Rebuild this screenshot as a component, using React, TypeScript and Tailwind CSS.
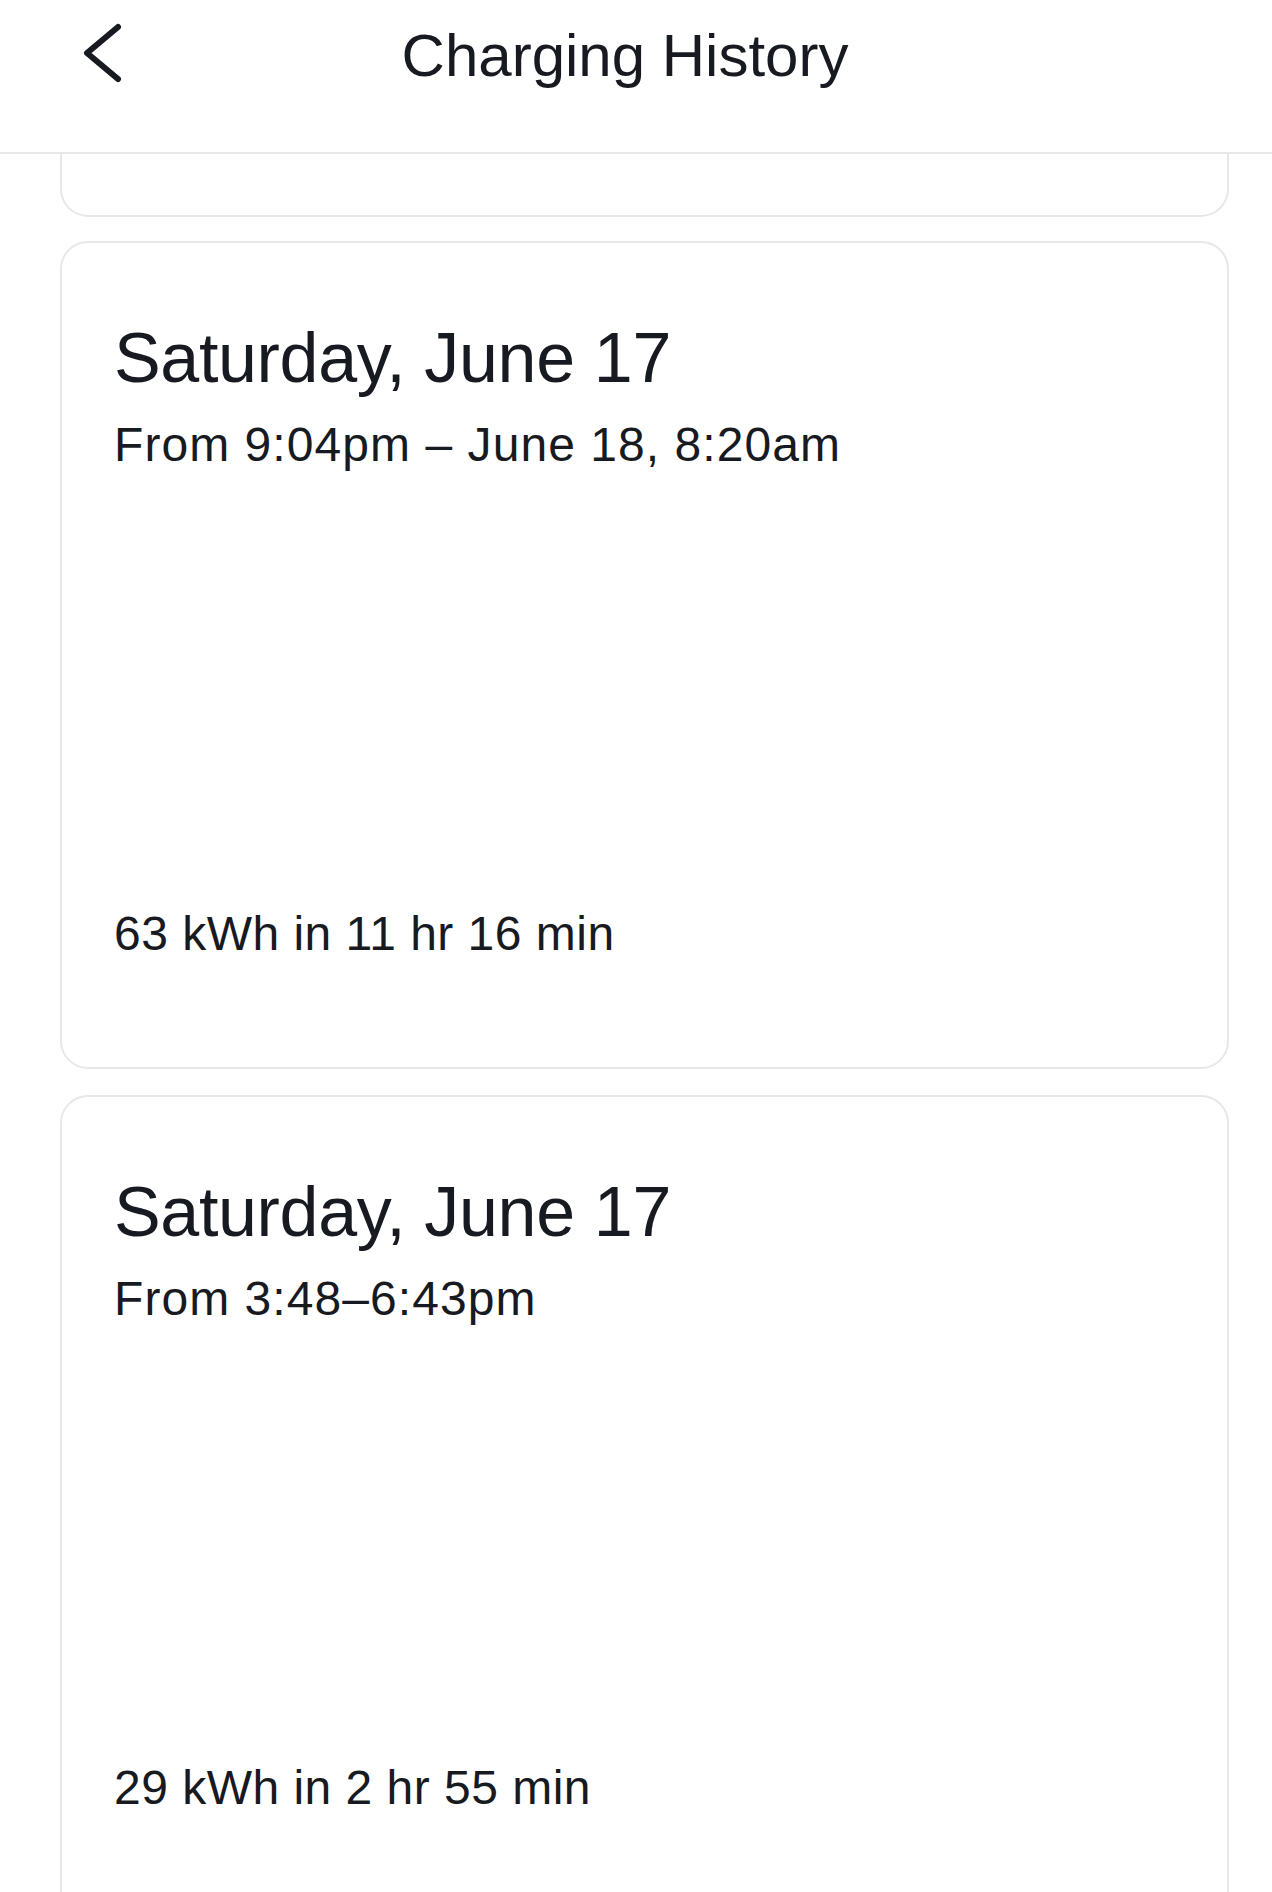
import React from "react";

interface Session {
  date: string;
  range: string;
  energy: string;
}

const SESSIONS: Session[] = [
  { date: "Saturday, June 17", range: "From 9:04pm – June 18, 8:20am", energy: "63 kWh in 11 hr 16 min" },
  { date: "Saturday, June 17", range: "From 3:48–6:43pm", energy: "29 kWh in 2 hr 55 min" },
];

function BackChevron() {
  return (
    <svg width="42" height="62" viewBox="0 0 42 62" fill="none">
      <polyline
        points="36,5 5,31 36,57"
        stroke="#171a20"
        strokeWidth="6"
        strokeLinecap="round"
        strokeLinejoin="round"
      />
    </svg>
  );
}

function SessionCard({ session, className }: { session: Session; className?: string }) {
  return (
    <div
      className={`flex flex-col border-2 border-[#e8e8e8] rounded-[28px] bg-white pl-[52px] pt-[80px] pb-[109px] text-[#171a20] ${className ?? ""}`}
    >
      <p className="text-[70px] leading-none tracking-[-0.005em]">{session.date}</p>
      <p className="mt-[28px] text-[48px] leading-none tracking-[0.022em]">{session.range}</p>
      {/* chart area */}
      <div className="h-[441px]" />
      <p className="text-[48px] leading-none tracking-[0.01em]">{session.energy}</p>
    </div>
  );
}

export default function App() {
  return (
    <div
      className="h-[1892px] w-[1272px] overflow-hidden bg-white"
      style={{ fontFamily: '"Liberation Sans", Arial, sans-serif' }}
    >
      {/* Header */}
      <header className="grid h-[154px] grid-cols-[1fr_auto_1fr] items-start border-b-2 border-[#e8e8e8] pt-[22px] pr-[22px]">
        <div className="pl-[82px]">
          <BackChevron />
        </div>
        <h1 className="mt-[4px] text-[60px] leading-none text-[#171a20]">Charging History</h1>
        <div />
      </header>

      {/* List */}
      <div className="flex flex-col pl-[60px] pr-[43px]">
        <div className="h-[63px] rounded-b-[28px] border-2 border-t-0 border-[#e8e8e8]" />
        <SessionCard session={SESSIONS[0]} className="mt-[24px]" />
        <SessionCard session={SESSIONS[1]} className="mt-[26px]" />
      </div>
    </div>
  );
}
